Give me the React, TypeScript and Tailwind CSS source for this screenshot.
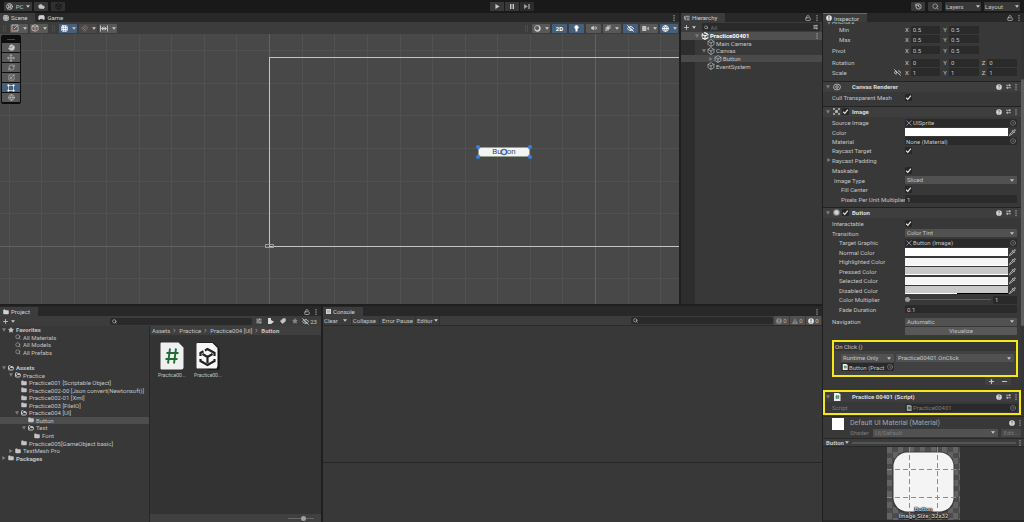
import React from "react";
import {
  Box,
  ChevronRight,
  CircleDot,
  Cloud,
  EyeOff,
  Folder,
  FolderOpen,
  Gamepad2,
  Globe,
  Grid3x3,
  Hand,
  History,
  Link2Off,
  ListTree,
  LockOpen,
  Magnet,
  Minus,
  Move,
  Pipette,
  Plus,
  RefreshCw,
  Scaling,
  Search,
  SlidersHorizontal,
  Sparkles,
  Star,
  Tag,
  CircleUserRound,
  Volume2,
} from "lucide-react";

type Children = { children?: React.ReactNode };

/* ---------- small shared pieces ---------- */

const Caret = ({ className = "" }: { className?: string }) => (
  <svg viewBox="0 0 6 4" className={`h-[3px] w-1 shrink-0 ${className}`} fill="#c8c8c8">
    <path d="M0 0h6L3 4z" />
  </svg>
);

const Fold = ({ open = true, className = "" }: { open?: boolean; className?: string }) => (
  <svg viewBox="0 0 6 6" className={`size-1 shrink-0 ${className}`} fill="#7d7d7d">
    <path d={open ? "M0 .5h6L3 5.5z" : "M.5 0v6L5.5 3z"} />
  </svg>
);

const Dots = () => (
  <svg viewBox="0 0 2 6" className="h-[6px] w-[2px] shrink-0" fill="#a8a8a8">
    <circle cx="1" cy=".8" r=".7" />
    <circle cx="1" cy="3" r=".7" />
    <circle cx="1" cy="5.2" r=".7" />
  </svg>
);

const Cube = () => <Box className="size-2 shrink-0 text-[#c4c4c4]" strokeWidth={2} />;

const UnityMark = ({ className }: { className: string }) => (
  <svg viewBox="0 0 24 24" className={className} fill="none" stroke="currentColor" strokeWidth="3.2">
    <path d="M9.5 3.6 12 2l8.6 5v3.4M20.6 14v3L12 22l-3-1.7M3.4 14.5V7l3-1.8M12 12v6.5M12 12 6.5 8.8M12 12l5.5-3.2M15 20.3l-3 1.7-8.6-5" />
  </svg>
);

const HelpIcon = ({ className = "" }: { className?: string }) => (
  <svg viewBox="0 0 8 8" className={`size-[6px] shrink-0 ${className}`}>
    <circle cx="4" cy="4" r="3.8" fill="#d8d8d8" />
    <path d="M2.9 3.1c0-1.400 2.300-1.400 2.300 0 0 .8-1.200.8-1.200 1.700M4 5.500v.8" fill="none" stroke="#3e3e3e" strokeWidth=".8" />
  </svg>
);

const InfoIcon = ({ fill, className = "size-[6px]" }: { fill: string; className?: string }) => (
  <svg viewBox="0 0 8 8" className={`shrink-0 ${className}`}>
    <circle cx="4" cy="4" r="3.800" fill={fill} />
    <path d="M4 1.600v3M4 5.400v1.200" stroke="#3a3a3a" strokeWidth="1.200" />
  </svg>
);

const TabBar = ({ children, locked = true }: Children & { locked?: boolean }) => (
  <div className="flex h-[9px] shrink-0 items-stretch bg-[#282828] pr-1">
    {children}
    <div className="ml-auto flex items-center gap-[5px]">
      {locked && <LockOpen className="size-[6px] text-[#b4b4b4]" strokeWidth={3} />}
      <Dots />
    </div>
  </div>
);

const Tab = ({ children, active = true }: Children & { active?: boolean }) => (
  <button
    className={`flex items-center gap-[2px] px-[3px] text-[6px] text-[#d2d2d2] ${active ? "bg-[#3c3c3c] pr-2" : ""}`}
  >
    {children}
  </button>
);

const ToolButton = ({
  label,
  on,
  menu,
  dim,
  children,
}: Children & { label: string; on?: boolean; menu?: boolean; dim?: boolean }) => (
  <button
    aria-label={label}
    className={`flex h-[9px] items-center justify-center gap-1 rounded-[1px] text-[#d0d0d0] ${
      menu ? "w-[18px]" : "w-[15px]"
    } ${on ? "bg-[#46607c]" : dim ? "bg-[#484848]" : "bg-[#585858]"}`}
  >
    {children}
    {menu && <Caret />}
  </button>
);

const Grip = () => <span className="mx-[2px] h-[7px] w-[3px] border-x border-[#4c4c4c]" />;

/* ---------- header ---------- */

const TopBar = () => (
  <header className="grid h-[13px] shrink-0 grid-cols-[1fr_auto_1fr] items-center bg-[#191919] px-1">
    <div className="flex gap-[2px]">
      <button className="flex h-[9px] w-7 items-center justify-center gap-[3px] rounded-[1px] bg-[#383838] text-[6px]">
        <CircleUserRound className="size-[7px]" strokeWidth={3} />
        PC
        <Caret />
      </button>
      <button aria-label="Cloud" className="flex h-[9px] w-[14px] items-center justify-center rounded-[1px] bg-[#383838]">
        <Cloud className="size-[7px]" fill="currentColor" />
      </button>
      <button aria-label="Collab" className="ml-px flex h-[9px] w-[14px] items-center justify-center rounded-[1px] bg-[#303030]">
        <Box className="size-[7px] text-[#151515]" strokeWidth={3} />
      </button>
    </div>
    <div className="flex gap-px">
      <button aria-label="Play" className="flex h-[9px] w-[14px] items-center justify-center bg-[#383838]">
        <svg viewBox="0 0 5 6" className="h-[5px] w-[5px]" fill="#c8c8c8">
          <path d="M0 0l5 3-5 3z" />
        </svg>
      </button>
      <button aria-label="Pause" className="flex h-[9px] w-[14px] items-center justify-center bg-[#383838]">
        <svg viewBox="0 0 4 5" className="h-[5px] w-1" fill="#c8c8c8">
          <path d="M0 0h1.4v5H0zM2.6 0H4v5H2.6z" />
        </svg>
      </button>
      <button aria-label="Step" className="flex h-[9px] w-[14px] items-center justify-center bg-[#2c2c2c]">
        <svg viewBox="0 0 6 5" className="h-[5px] w-[6px]" fill="#9a9a9a">
          <path d="M0 0l3.8 2.5L0 5zM4.3 0h1.4v5H4.3z" />
        </svg>
      </button>
    </div>
    <div className="flex justify-end gap-[3px]">
      <button aria-label="Undo history" className="flex h-[9px] w-[14px] items-center justify-center rounded-[1px] bg-[#383838]">
        <History className="size-[7px]" strokeWidth={3} />
      </button>
      <button aria-label="Search" className="flex h-[9px] w-[14px] items-center justify-center rounded-[1px] bg-[#383838]">
        <Search className="size-[7px]" strokeWidth={2} />
      </button>
      <button className="flex h-[9px] w-9 items-center justify-between rounded-[1px] bg-[#383838] px-px text-[6px]">
        Layers
        <Caret />
      </button>
      <button className="flex h-[9px] w-9 items-center justify-between rounded-[1px] bg-[#383838] px-px text-[6px]">
        Layout
        <Caret />
      </button>
    </div>
  </header>
);

/* ---------- scene ---------- */

const gridX = [9, 41, 74, 106, 139, 171, 204, 236, 302, 334, 367, 400, 432, 465, 497, 530, 562, 628, 660];
const gridY = [16, 49, 81, 114, 147, 179, 244];

const tools = [
  { name: "Hand", icon: <Hand className="size-[7px]" fill="currentColor" /> },
  { name: "Move", icon: <Move className="size-2" strokeWidth={2} /> },
  { name: "Rotate", icon: <RefreshCw className="size-[7px]" strokeWidth={2} /> },
  { name: "Scale", icon: <Scaling className="size-[7px]" strokeWidth={2} /> },
  {
    name: "Rect",
    icon: (
      <svg viewBox="0 0 8 8" className="size-2" fill="#fff" stroke="#fff" strokeWidth=".6">
        <path d="M1.5 1.5h5v5h-5z" fill="none" />
        <path d="M.8.8h1.2V2H.8zM6 .8h1.2V2H6zM.8 6h1.2v1.2H.8zM6 6h1.2v1.2H6z" />
      </svg>
    ),
  },
  { name: "Transform", icon: <Globe className="size-[7px]" strokeWidth={2} /> },
];

const Scene = () => (
  <section className="flex min-w-0 flex-1 flex-col">
    <TabBar locked={false}>
      <Tab>
        <Grid3x3 className="size-[6px]" strokeWidth={3} />
        Scene
      </Tab>
      <Tab active={false}>
        <Gamepad2 className="size-[7px]" fill="currentColor" />
        Game
      </Tab>
    </TabBar>
    <div className="flex h-3 shrink-0 items-center gap-[2px] bg-[#3c3c3c] px-px">
      <Grip />
      <ToolButton label="Pivot" menu>
        <svg viewBox="0 0 8 8" className="size-2" fill="none" stroke="#c8c8c8" strokeWidth=".8">
          <path d="M1 1h6v6H1zM3 5l3-3" />
          <path d="M.5 6h2v1.5h-2z" fill="#c9694c" stroke="#c9694c" />
        </svg>
      </ToolButton>
      <ToolButton label="Handle rotation" menu>
        <svg viewBox="0 0 8 8" className="size-2" fill="none" stroke="#c8c8c8" strokeWidth=".8">
          <path d="M1 2l3-1.2L7 2v4L4 7.2 1 6zM1 2l3 1.2L7 2M4 3.2v4" />
          <circle cx="5.6" cy="5.8" r="1.2" stroke="#c9694c" />
        </svg>
      </ToolButton>
      <Grip />
      <ToolButton label="Grid" menu on>
        <Grid3x3 className="size-[7px] text-white" strokeWidth={3} />
      </ToolButton>
      <ToolButton label="Snap" menu dim>
        <Magnet className="size-[7px] text-[#b47864]" strokeWidth={2} />
      </ToolButton>
      <ToolButton label="Increment" menu>
        <svg viewBox="0 0 8 7" className="h-[7px] w-2" fill="none" stroke="#c8c8c8">
          <path d="M.5.5v6M7.500.5v6M.5 3.500h7M2.500 2v3M4 1.500v4M5.500 2v3" strokeWidth=".9" />
        </svg>
      </ToolButton>
      <div className="ml-auto flex items-center gap-[2px]">
        <Grip />
        <ToolButton label="Shading" menu>
          <svg viewBox="0 0 8 8" className="size-[7px]">
            <circle cx="4" cy="4" r="3.6" fill="#d0d0d0" />
            <circle cx="3.5" cy="3.5" r="2.4" fill="#585858" />
          </svg>
        </ToolButton>
        <button className="h-[9px] w-[15px] rounded-[1px] bg-[#46607c] text-[6px] font-bold leading-[9px] text-white">2D</button>
        <ToolButton label="Lighting" on>
          <Lamp />
        </ToolButton>
        <ToolButton label="Audio">
          <Volume2 className="size-[6px]" fill="currentColor" />
        </ToolButton>
        <ToolButton label="Effects" menu>
          <Sparkles className="size-[6px]" fill="currentColor" />
        </ToolButton>
        <ToolButton label="Hidden objects" on>
          <EyeOff className="size-[7px] text-white" strokeWidth={3} />
        </ToolButton>
        <ToolButton label="Camera" menu>
          <svg viewBox="0 0 8 6" className="h-[5px] w-[7px]" fill="#c0c0c0">
            <path d="M0 0h5v6H0zM5.5 3L8 .5v5z" />
          </svg>
        </ToolButton>
        <ToolButton label="Gizmos" menu on>
          <Globe className="size-[7px] text-white" strokeWidth={3} />
        </ToolButton>
      </div>
    </div>
    <div className="relative flex-1 overflow-hidden bg-[#484848]">
      <svg className="absolute inset-0 size-full" shapeRendering="crispEdges">
        {gridX.map((x) => (
          <rect key={x} x={x} y="0" width="1" height="100%" fill="#515151" />
        ))}
        {gridY.map((y) => (
          <rect key={y} x="0" y={y} width="100%" height="1" fill="#515151" />
        ))}
        <rect x="269" y="0" width="1" height="100%" fill="#626262" />
        <rect x="595" y="0" width="1" height="100%" fill="#626262" />
        <rect x="0" y="212" width="100%" height="1" fill="#626262" />
        <rect x="269" y="23" width="100%" height="1" fill="#c4c4c4" />
        <rect x="269" y="212" width="100%" height="1" fill="#c4c4c4" />
        <rect x="269" y="23" width="1" height="190" fill="#c4c4c4" />
        <rect x="265.5" y="210.5" width="8" height="3" fill="none" stroke="#9a9a9a" />
      </svg>
      <button className="absolute top-[113px] left-[478px] h-[10px] w-[52px] rounded-[3px] border border-[#93a08c] bg-[#f4f4f4] text-[8px] leading-[8px] text-[#4a4a4a]">
        Button
      </button>
      <svg className="absolute top-[110px] left-[475px] h-4 w-[58px]" fill="#3b7fe0">
        <circle cx="3" cy="3" r="2" />
        <circle cx="55" cy="3" r="2" />
        <circle cx="3" cy="13" r="2" />
        <circle cx="55" cy="13" r="2" />
        <circle cx="29" cy="8" r="2.6" fill="#dce8f8" stroke="#3d6fb5" strokeWidth="1.4" />
      </svg>
      <div className="absolute top-px left-px flex w-5 flex-col gap-px rounded-[2px] border border-[#0e0e0e] bg-[#0e0e0e] pb-px">
        <span className="mx-auto mt-[3px] mb-[2px] h-px w-2 bg-[#444]" />
        {tools.map((tool) => (
          <button
            key={tool.name}
            aria-label={tool.name}
            className={`flex h-[9px] items-center justify-center text-[#c8c8c8] ${
              tool.name === "Rect" ? "bg-[#46607c]" : "bg-[#585858]"
            }`}
          >
            {tool.icon}
          </button>
        ))}
      </div>
    </div>
  </section>
);

function Lamp() {
  return (
    <svg viewBox="0 0 6 8" className="h-[7px] w-[5px]" fill="#fff">
      <circle cx="3" cy="2.600" r="2.500" />
      <path d="M1.800 4.500h2.400v3H1.800z" />
    </svg>
  );
}

/* ---------- hierarchy ---------- */

const Hierarchy = () => (
  <section className="flex w-[143px] shrink-0 flex-col border-l-2 border-[#1f1f1f] bg-[#383838]">
    <TabBar>
      <Tab>
        <ListTree className="size-[6px]" strokeWidth={3} />
        Hierarchy
      </Tab>
    </TabBar>
    <div className="flex h-[10px] shrink-0 items-center gap-[2px] bg-[#3c3c3c] px-[2px]">
      <Plus className="size-[7px]" strokeWidth={3} />
      <Caret />
      <label className="ml-1 flex h-2 flex-1 items-center gap-[2px] rounded-[2px] bg-[#2a2a2a] px-[2px]">
        <Search className="size-[5px]" strokeWidth={3} />
        <input aria-label="Search hierarchy" placeholder="All" className="w-full min-w-0 text-[6px] leading-none outline-none placeholder:text-[#707070]" />
        <SlidersHorizontal className="size-[6px]" strokeWidth={3} />
      </label>
    </div>
    <div className="flex-1 bg-linear-to-r from-[#2d2d2d] from-[14px] to-[#383838] to-[14px]">
      <ul className="grid h-[38px] auto-rows-fr">
        <li className="flex items-center gap-px bg-[#505050] pr-1 pl-[14px] font-bold text-white">
          <Fold className="mr-px" />
          <UnityMark className="size-2" />
          <span className="flex-1">Practice00401</span>
          <Dots />
        </li>
        <li className="flex items-center gap-px pl-[26px]">
          <Cube />
          Main Camera
        </li>
        <li className="flex items-center gap-px pl-[21px]">
          <Fold />
          <Cube />
          Canvas
        </li>
        <li className="flex items-center gap-px bg-[#4a4a4a] pl-[28px]">
          <Fold open={false} />
          <Cube />
          Button
        </li>
        <li className="flex items-center gap-px pl-[26px]">
          <Cube />
          EventSystem
        </li>
      </ul>
    </div>
  </section>
);

/* ---------- project ---------- */

interface TreeRow {
  name: string;
  pad: string;
  icon?: "star" | "search" | "open";
  fold?: "open" | "closed";
  bold?: boolean;
  selected?: boolean;
}

const tree: TreeRow[] = [
  { name: "Favorites", pad: "pl-[2px]", icon: "star", fold: "open", bold: true },
  { name: "All Materials", pad: "pl-[9px]", icon: "search" },
  { name: "All Models", pad: "pl-[9px]", icon: "search" },
  { name: "All Prefabs", pad: "pl-[9px]", icon: "search" },
  { name: "", pad: "pl-0" },
  { name: "Assets", pad: "pl-[2px]", icon: "open", fold: "open", bold: true },
  { name: "Practice", pad: "pl-[9px]", icon: "open", fold: "open" },
  { name: "Practice001 [Scriptable Object]", pad: "pl-[15px]" },
  { name: "Practice002-00 [Json convert(Newtonsoft)]", pad: "pl-[15px]" },
  { name: "Practice002-01 [Xml]", pad: "pl-[15px]" },
  { name: "Practice003 [FileIO]", pad: "pl-[15px]" },
  { name: "Practice004 [UI]", pad: "pl-[15px]", icon: "open", fold: "open" },
  { name: "Button", pad: "pl-[22px]", selected: true },
  { name: "Text", pad: "pl-[22px]", icon: "open", fold: "open" },
  { name: "Font", pad: "pl-[28px]" },
  { name: "Practice005[GameObject basic]", pad: "pl-[15px]" },
  { name: "TextMesh Pro", pad: "pl-[9px]", fold: "closed" },
  { name: "Packages", pad: "pl-[2px]", fold: "closed", bold: true },
];

const TreeIcon = ({ icon }: { icon?: TreeRow["icon"] }) => {
  if (icon === "star") return <Star className="size-[6px] shrink-0" fill="currentColor" />;
  if (icon === "search") return <Search className="size-[6px] shrink-0" strokeWidth={2} />;
  if (icon === "open") return <FolderOpen className="size-[6px] shrink-0" strokeWidth={4} />;
  return <Folder className="size-[6px] shrink-0" fill="currentColor" />;
};

const Project = () => (
  <section className="flex w-[323px] shrink-0 flex-col border-r-2 border-[#1f1f1f]">
    <div className="h-px bg-[#282828]" />
    <TabBar>
      <Tab>
        <Folder className="size-[6px]" fill="currentColor" />
        Project
      </Tab>
    </TabBar>
    <div className="flex h-[10px] shrink-0 items-center gap-[2px] bg-[#3c3c3c] pr-1 pl-[2px]">
      <Plus className="size-[7px]" strokeWidth={3} />
      <Caret />
      <label className="ml-auto flex h-[7px] w-[142px] items-center rounded-[2px] bg-[#2a2a2a] px-[2px]">
        <Search className="size-[5px] shrink-0" strokeWidth={3} />
        <input aria-label="Search project" className="w-full min-w-0 text-[6px] leading-none outline-none" />
      </label>
      <button aria-label="Search options" className="flex w-[10px] justify-center">
        <SlidersHorizontal className="size-[6px]" strokeWidth={3} />
      </button>
      <button aria-label="Filter by type" className="flex w-[10px] justify-center">
        <svg viewBox="0 0 6 6" className="size-[6px]" fill="#d8d8d8">
          <path d="M0 0h3v6H0zM3 2l3 1.8L3 6z" />
        </svg>
      </button>
      <button aria-label="Filter by label" className="flex w-[10px] justify-center">
        <Tag className="size-[6px] scale-x-[-1]" fill="currentColor" />
      </button>
      <button aria-label="Favorites" className="flex w-[10px] justify-center">
        <Star className="size-[6px] text-[#888]" fill="currentColor" />
      </button>
      <button className="flex items-center gap-px text-[6px]">
        <EyeOff className="size-[7px]" strokeWidth={3} />
        23
      </button>
    </div>
    <div className="flex flex-1">
      <div className="w-[150px] shrink-0 border-r border-[#262626] bg-[#383838]">
        <ul className="grid h-[136px] auto-rows-fr">
          {tree.map((row, i) => (
            <li
              key={i}
              className={`flex items-center gap-[2px] whitespace-nowrap ${row.pad} ${row.bold ? "font-bold" : ""} ${
                row.selected ? "bg-[#4d4d4d]" : ""
              }`}
            >
              {row.name && (
                <>
                  {row.fold ? <Fold open={row.fold === "open"} /> : <span className="w-1 shrink-0" />}
                  <TreeIcon icon={row.icon} />
                  {row.name}
                </>
              )}
            </li>
          ))}
        </ul>
      </div>
      <div className="flex flex-1 flex-col bg-[#333]">
        <nav className="flex h-[9px] items-center gap-[2px] bg-[#3f3f3f] px-[2px]">
          <a href="#assets">Assets</a>
          <ChevronRight className="size-[5px]" strokeWidth={3} />
          <a href="#practice">Practice</a>
          <ChevronRight className="size-[5px]" strokeWidth={3} />
          <a href="#practice004">Practice004 [UI]</a>
          <ChevronRight className="size-[5px]" strokeWidth={3} />
          <b>Button</b>
        </nav>
        <div className="flex flex-1 gap-2 px-2 pt-[7px] text-[5px]">
          <figure className="flex w-7 flex-col items-center gap-[2px]">
            <svg viewBox="0 0 24 28" className="h-7 w-6">
              <path d="M1.5.5h17l5 5v20a2 2 0 0 1-2 2h-20a1 1 0 0 1-1-1v-25a1 1 0 0 1 1-1z" fill="#f0f0f0" />
              <path d="M10 6.5 8 21.5M16 6.500 14 21.500M6.500 11h12M5.500 17h12" fill="none" stroke="#236b35" strokeWidth="1.900" />
            </svg>
            <figcaption>Practice00...</figcaption>
          </figure>
          <figure className="flex w-7 flex-col items-center gap-[2px]">
            <svg viewBox="0 0 24 28" className="h-7 w-6">
              <path d="M2.500.5h15l6 6V28H13l-2-1H2.500z" fill="#161616" />
              <path d="M1.500 1h15l5 5v18l-1 2.500h-19a1 1 0 0 1-1-1V2a1 1 0 0 1 1-1z" fill="#f7f7f7" />
              <path d="M9 8.500 11.500 7l7 4v3M4.500 14v-3l3-1.700M4.500 17v2l7 4 7-4v-2M11.500 15v6M11.500 15l-5-3M11.500 15l5-3" fill="none" stroke="#222" strokeWidth="2.200" />
            </svg>
            <figcaption>Practice00...</figcaption>
          </figure>
        </div>
        <div className="flex h-2 items-center justify-end bg-[#404040] pr-[7px]">
          <input
            type="range"
            aria-label="Icon size"
            defaultValue={60}
            className="h-px w-[26px] appearance-none bg-[#666] [&::-webkit-slider-thumb]:size-[5px] [&::-webkit-slider-thumb]:appearance-none [&::-webkit-slider-thumb]:rounded-full [&::-webkit-slider-thumb]:bg-[#a0a0a0]"
          />
        </div>
      </div>
    </div>
  </section>
);

/* ---------- console ---------- */

const Console = () => (
  <section className="flex min-w-0 flex-1 flex-col bg-[#383838]">
    <div className="h-px bg-[#282828]" />
    <TabBar locked={false}>
      <Tab>
        <svg viewBox="0 0 6 6" className="size-[5px]" fill="#d8d8d8">
          <path d="M0 0h6v6H0z" />
          <path d="M1 1.500h4M1 3h4M1 4.500h4" stroke="#777" strokeWidth=".5" />
        </svg>
        Console
      </Tab>
    </TabBar>
    <div className="flex h-[10px] shrink-0 items-stretch border-b border-[#2a2a2a] bg-[#3c3c3c] text-[6px]">
      <button className="flex items-center gap-[5px] pr-1 pl-px">
        Clear
        <Caret />
      </button>
      <button className="border-l border-[#323232] pr-[3px] pl-px">Collapse</button>
      <button className="border-l border-[#323232] px-[2px]">Error Pause</button>
      <button className="flex items-center gap-px border-x border-[#323232] px-px">
        Editor
        <Caret />
      </button>
      <label className="my-px ml-auto flex w-[142px] items-center rounded-[2px] bg-[#2a2a2a] px-[2px]">
        <Search className="size-[5px] shrink-0" strokeWidth={3} />
        <input aria-label="Search console" className="w-full min-w-0 text-[6px] leading-none outline-none" />
      </label>
      <div className="ml-px flex gap-px pr-px">
        <button className="flex w-[15px] items-center justify-center gap-px bg-[#505050] text-[#b0b0b0]">
          <InfoIcon fill="#8c8c8c" />0
        </button>
        <button className="flex w-[15px] items-center justify-center gap-px bg-[#505050] text-[#b0b0b0]">
          <svg viewBox="0 0 8 7" className="size-[6px]">
            <path d="M4 0l4 7H0z" fill="#8c8c8c" />
            <path d="M4 2.500v2M4 5.200v1" stroke="#3a3a3a" />
          </svg>
          0
        </button>
        <button className="flex w-[15px] items-center justify-center gap-px bg-[#505050]">
          <InfoIcon fill="#e8e8e8" />0
        </button>
      </div>
    </div>
    <div className="flex-[137] border-b border-[#262626]" />
    <div className="flex-[59]" />
  </section>
);

/* ---------- inspector ---------- */

const Row = ({
  label,
  pad = "pl-[9px]",
  id,
  children,
}: Children & { label: string; pad?: string; id?: string }) => (
  <div className="flex min-h-0 min-w-0 items-center pr-1">
    <label htmlFor={id} className={`w-[82px] shrink-0 whitespace-nowrap ${pad}`}>
      {label}
    </label>
    {children}
  </div>
);

const Check = ({ id, label }: { id?: string; label?: string }) => (
  <span className="relative flex size-[7px] shrink-0 rounded-[1px] bg-[#262626]">
    <input id={id} aria-label={label} type="checkbox" defaultChecked className="peer size-full appearance-none" />
    <svg viewBox="0 0 6 6" className="pointer-events-none absolute inset-0 hidden peer-checked:block" fill="none" stroke="#e4e4e4" strokeWidth="1">
      <path d="M1 3.200 2.400 4.600 5 1.400" />
    </svg>
  </span>
);

const Field = ({ id, value, label, className = "flex-1" }: { id?: string; value: string; label?: string; className?: string }) => (
  <input
    id={id}
    aria-label={label}
    defaultValue={value}
    className={`h-2 min-w-0 rounded-[1px] bg-[#2a2a2a] px-[2px] text-[6px] leading-none outline-none ${className}`}
  />
);

const Select = ({ id, value, label }: { id?: string; value: string; label?: string }) => (
  <span className="relative flex min-w-0 flex-1 items-center">
    <select id={id} aria-label={label} className="h-2 w-full appearance-none rounded-[1px] bg-[#515151] px-[2px] text-[6px] leading-[8px]">
      <option>{value}</option>
    </select>
    <Caret className="pointer-events-none absolute right-[3px]" />
  </span>
);

const ObjectField = ({ value, icon }: { value: string; icon?: React.ReactNode }) => (
  <button className="flex h-2 min-w-0 flex-1 items-center gap-px rounded-[1px] bg-[#2a2a2a] px-px text-[6px]">
    {icon}
    <span className="flex-1 overflow-hidden text-left whitespace-nowrap">{value}</span>
    <CircleDot className="size-[6px] shrink-0 text-[#a0a0a0]" strokeWidth={2} />
  </button>
);

const SpriteIcon = () => (
  <svg viewBox="0 0 6 6" className="size-[6px] shrink-0" stroke="#8d9dc8" strokeWidth=".8">
    <path d="M.5.5 2 2M5.500.5 4 2M.5 5.500 2 4M5.500 5.500 4 4" />
    <path d="M2.300 2.300h1.400v1.400H2.300z" fill="#d8d8d8" stroke="none" />
  </svg>
);

const ScriptIcon = ({ className = "size-[6px]" }: { className?: string }) => (
  <svg viewBox="0 0 8 8" className={`shrink-0 ${className}`}>
    <path d="M1 0h5l1.500 1.500V8H1z" fill="#eee" />
    <path d="M3.600 2v4M5.200 2v4M2.400 3.300h4M2.400 4.900h4" stroke="#2d7a42" strokeWidth=".7" />
  </svg>
);

const ColorField = ({ fill, half }: { fill: string; half?: boolean }) => (
  <>
    <button aria-label="Pick color" className={`flex h-2 flex-1 items-end ${fill}`}>
      <span className="h-px w-1/2 bg-white" />
      <span className={`h-px w-1/2 ${half ? "bg-black" : "bg-white"}`} />
    </button>
    <Pipette className="mx-px size-[7px]" strokeWidth={3} />
  </>
);

const Vector = ({ values }: { values: [string, string][] }) => (
  <div className="grid flex-1 grid-cols-3 gap-x-[3px]">
    {values.map(([axis, value]) => (
      <label key={axis} className="flex items-center gap-[2px]">
        {axis}
        <Field value={value} />
      </label>
    ))}
  </div>
);

const ComponentHeader = ({ title, icon, checked }: { title: string; icon: React.ReactNode; checked?: boolean }) => (
  <div className="flex h-[11px] items-center border-t border-[#222] bg-[#3e3e3e] pr-1 pb-px pl-[3px]">
    <Fold />
    <span className="ml-[3px] flex w-[19px] items-center gap-[2px]">
      {icon}
      {checked && <Check label={`${title} enabled`} />}
    </span>
    <h3 className="flex-1 text-[6px] font-bold text-[#dcdcdc]">{title}</h3>
    <span className="flex items-center gap-1">
      <HelpIcon />
      <svg viewBox="0 0 6 6" className="size-[5px]" fill="none" stroke="#c4c4c4" strokeWidth=".9">
        <path d="M0 1.500h6M4.300 0v3M0 4.500h6M1.700 3v3" />
      </svg>
      <Dots />
    </span>
  </div>
);

const OnClick = () => (
  <div className="mt-1 ml-[9px] border-2 border-[#f5e814] bg-[#414141]">
    <h4 className="h-[9px] bg-[#353535] pl-px leading-[9px]">On Click ()</h4>
    <div className="flex gap-[2px] px-[2px] pt-[3px] pb-1">
      <div className="flex w-[58px] shrink-0 flex-col gap-px pl-[5px]">
        <Select label="Call state" value="Runtime Only" />
        <div className="flex">
          <ObjectField value="Button (Pract" icon={<ScriptIcon />} />
        </div>
      </div>
      <div className="min-w-0 flex-1">
        <Select label="Function" value="Practice00401.OnClick" />
      </div>
    </div>
  </div>
);

const Preview = () => (
  <div className="flex flex-1 justify-center overflow-hidden border-b-2 border-[#282828] bg-[#333]">
    <div className="relative w-[73px] bg-[repeating-conic-gradient(#4c4c4c_0_25%,#636363_0_50%)] bg-[length:11px_11px]">
      <svg viewBox="0 0 73 72" className="absolute inset-0 h-[72px] w-[73px]">
        <rect x="5.500" y="4.500" width="62" height="62" rx="15" fill="#2c2c2c" opacity=".6" />
        <rect x="6.500" y="5.500" width="60" height="59" rx="14" fill="#f4f4f4" />
        <path d="M22.500 0v72M50.500 0v72M0 22.500h73M0 50.500h73" stroke="#8c8c8c" strokeWidth="1" strokeDasharray="5 3" />
      </svg>
      <p className="absolute inset-x-0 bottom-px text-center text-[6px] leading-[7px] font-bold text-[#c8c8c8] [text-shadow:0_0_1px_#000,0_0_1px_#000,0_1px_1px_#000]">
        Button
        <br />
        <span className="whitespace-nowrap">Image Size: 32x32</span>
      </p>
    </div>
  </div>
);

const Inspector = () => (
  <aside className="flex w-[202px] shrink-0 flex-col border-l border-[#1f1f1f] bg-[#383838]">
    <TabBar>
      <div className="flex border-t border-[#3a72b0]">
        <Tab>
          <InfoIcon fill="#e4e4e4" />
          Inspector
        </Tab>
      </div>
    </TabBar>
    <div className="flex">
      <div className="min-w-0 flex-1">
        <div className="flex h-[3px] items-end gap-px overflow-hidden pl-1 leading-[6px]">
          <Fold />
          Anchors
        </div>
        <div className="grid h-[19px] auto-rows-fr grid-cols-1">
          <Row label="Min" pad="pl-4">
            <Vector values={[["X", "0.5"], ["Y", "0.5"]]} />
          </Row>
          <Row label="Max" pad="pl-4">
            <Vector values={[["X", "0.5"], ["Y", "0.5"]]} />
          </Row>
        </div>
        <div className="mt-px grid h-[10px] grid-cols-1">
          <Row label="Pivot">
            <Vector values={[["X", "0.5"], ["Y", "0.5"]]} />
          </Row>
        </div>
        <div className="mt-[3px] grid h-[19px] auto-rows-fr grid-cols-1">
          <Row label="Rotation">
            <Vector values={[["X", "0"], ["Y", "0"], ["Z", "0"]]} />
          </Row>
          <div className="flex items-center pr-1">
            <span className="flex w-[82px] shrink-0 items-center justify-between pr-1 pl-[9px]">
              Scale
              <Link2Off className="size-[7px]" strokeWidth={3} />
            </span>
            <Vector values={[["X", "1"], ["Y", "1"], ["Z", "1"]]} />
          </div>
        </div>

        <div className="mt-1">
          <ComponentHeader
            title="Canvas Renderer"
            icon={
              <svg viewBox="0 0 8 8" className="size-2" fill="none" stroke="#c4c4c4" strokeWidth=".8">
                <ellipse cx="4" cy="4" rx="3.500" ry="2.900" />
                <circle cx="4" cy="4" r="1.300" />
              </svg>
            }
          />
        </div>
        <div className="mt-px grid h-[9px] grid-cols-1">
          <Row label="Cull Transparent Mesh" id="cull">
            <Check id="cull" />
          </Row>
        </div>

        <div className="mt-1">
          <ComponentHeader
            title="Image"
            checked
            icon={
              <svg viewBox="0 0 8 8" className="size-[7px]" fill="none" stroke="#c4c4c4" strokeWidth=".8">
                <path d="M.5 2.500v-2h2M5.500.5h2v2M7.500 5.500v2h-2M2.500 7.500h-2v-2M.5.5 3 3M7.500.5 5 3M.5 7.500 3 5M7.500 7.500 5 5" />
                <path d="M3 3h2v2H3z" fill="#c4c4c4" />
              </svg>
            }
          />
        </div>
        <div className="mt-px grid h-[47px] auto-rows-fr grid-cols-1">
          <Row label="Source Image">
            <ObjectField value="UISprite" icon={<SpriteIcon />} />
          </Row>
          <Row label="Color">
            <ColorField fill="bg-white" />
          </Row>
          <Row label="Material">
            <ObjectField value="None (Material)" />
          </Row>
          <Row label="Raycast Target" id="raycast">
            <Check id="raycast" />
          </Row>
          <div className="flex items-center gap-px pl-1">
            <Fold open={false} />
            Raycast Padding
          </div>
        </div>
        <div className="mt-px grid h-[38px] auto-rows-fr grid-cols-1">
          <Row label="Maskable" id="maskable">
            <Check id="maskable" />
          </Row>
          <Row label="Image Type" pad="pl-[11px]" id="image-type">
            <Select id="image-type" value="Sliced" />
          </Row>
          <Row label="Fill Center" pad="pl-[18px]" id="fill-center">
            <Check id="fill-center" />
          </Row>
          <Row label="Pixels Per Unit Multiplier" pad="pl-[18px]" id="ppu">
            <Field id="ppu" value="1" />
          </Row>
        </div>

        <div className="mt-[3px]">
          <ComponentHeader
            title="Button"
            checked
            icon={
              <svg viewBox="0 0 8 8" className="size-[7px]">
                <circle cx="4" cy="4" r="3.800" fill="#8a8a8a" />
                <circle cx="4" cy="4" r="2.500" fill="#d4d4d4" />
              </svg>
            }
          />
        </div>
        <div className="mt-px grid h-[95px] auto-rows-fr grid-cols-1">
          <Row label="Interactable" id="interactable">
            <Check id="interactable" />
          </Row>
          <Row label="Transition" id="transition">
            <Select id="transition" value="Color Tint" />
          </Row>
          <Row label="Target Graphic" pad="pl-4">
            <ObjectField value="Button (Image)" icon={<SpriteIcon />} />
          </Row>
          <Row label="Normal Color" pad="pl-4">
            <ColorField fill="bg-white" />
          </Row>
          <Row label="Highlighted Color" pad="pl-4">
            <ColorField fill="bg-[#f5f5f5]" />
          </Row>
          <Row label="Pressed Color" pad="pl-4">
            <ColorField fill="bg-[#c8c8c8]" />
          </Row>
          <Row label="Selected Color" pad="pl-4">
            <ColorField fill="bg-[#f5f5f5]" />
          </Row>
          <Row label="Disabled Color" pad="pl-4">
            <ColorField fill="bg-[#c8c8c8]" half />
          </Row>
          <Row label="Color Multiplier" pad="pl-4" id="multiplier">
            <input
              id="multiplier"
              type="range"
              min={1}
              max={5}
              defaultValue={1}
              className="mr-[2px] h-px min-w-0 flex-1 appearance-none bg-[#5e5e5e] [&::-webkit-slider-thumb]:size-[5px] [&::-webkit-slider-thumb]:appearance-none [&::-webkit-slider-thumb]:rounded-full [&::-webkit-slider-thumb]:bg-[#999]"
            />
            <Field value="1" label="Color multiplier value" className="w-6" />
          </Row>
          <Row label="Fade Duration" pad="pl-4" id="fade">
            <Field id="fade" value="0.1" />
          </Row>
        </div>
        <div className="mt-[3px] grid h-[19px] auto-rows-fr grid-cols-1">
          <Row label="Navigation" id="navigation">
            <Select id="navigation" value="Automatic" />
          </Row>
          <Row label="">
            <button className="h-2 flex-1 rounded-[1px] bg-[#585858] text-[6px] leading-[8px]">Visualize</button>
          </Row>
        </div>

        <div className="pr-[3px]">
          <OnClick />
        </div>
        <div className="mr-[10px] ml-auto flex h-2 w-[26px] items-center justify-around rounded-b-[2px] bg-[#414141]">
          <button aria-label="Add listener">
            <Plus className="size-[7px]" strokeWidth={4} />
          </button>
          <button aria-label="Remove listener">
            <Minus className="size-[7px]" strokeWidth={4} />
          </button>
        </div>

        <div className="mt-[5px] pt-px pb-[2px] outline-2 -outline-offset-2 outline-[#f5e814]">
          <ComponentHeader title="Practice 00401 (Script)" icon={<ScriptIcon className="size-2" />} />
          <div className="grid h-[11px] grid-cols-1 text-[#7c7c7c]">
            <Row label="Script">
              <ObjectField value="Practice00401" icon={<ScriptIcon className="size-[6px] opacity-60" />} />
            </Row>
          </div>
        </div>
      </div>
      <div className="w-[3px] shrink-0 bg-[#343434] pt-[57px]">
        <div className="h-[247px] rounded-full bg-[#5e5e5e]" />
      </div>
    </div>

    <div className="mt-px flex h-[22px] shrink-0 items-center border-t border-[#2a2a2a] pr-[3px] pl-[9px]">
      <span className="mt-px mr-[6px] size-3 shrink-0 self-start bg-white" />
      <div className="flex min-w-0 flex-1 flex-col gap-[2px]">
        <div className="flex items-center">
          <span className="flex-1 text-[7px] leading-[8px] text-[#a4a4a4]">Default UI Material (Material)</span>
          <HelpIcon className="mr-1" />
          <Dots />
        </div>
        <div className="flex items-center gap-[3px] text-[#7c7c7c]">
          <label htmlFor="shader" className="w-5">
            Shader
          </label>
          <Select id="shader" value="UI/Default" />
          <button className="h-2 w-5 bg-[#484848] text-[6px] leading-[8px]">Edit...</button>
        </div>
      </div>
    </div>
    <div className="flex h-[9px] shrink-0 items-center gap-[3px] border-y border-[#282828] bg-[#3c3c3c] px-[3px]">
      <button className="flex items-center gap-px text-[6px] font-bold">
        Button
        <Caret />
      </button>
      <span className="h-[2px] flex-1 bg-[#555]" />
      <Dots />
    </div>
    <Preview />
  </aside>
);

export default function App() {
  return (
    <div className="flex h-screen min-h-[522px] w-full flex-col overflow-hidden bg-[#1f1f1f] font-[Roboto,'Liberation_Sans',sans-serif] text-[6px] leading-[7px] text-[#c4c4c4]">
      <TopBar />
      <main className="flex min-h-0 flex-1">
        <div className="flex min-w-0 flex-1 flex-col">
          <div className="flex h-[293px] shrink-0 border-b-2 border-[#1f1f1f]">
            <Scene />
            <Hierarchy />
          </div>
          <div className="flex flex-1">
            <Project />
            <Console />
          </div>
        </div>
        <Inspector />
      </main>
    </div>
  );
}
